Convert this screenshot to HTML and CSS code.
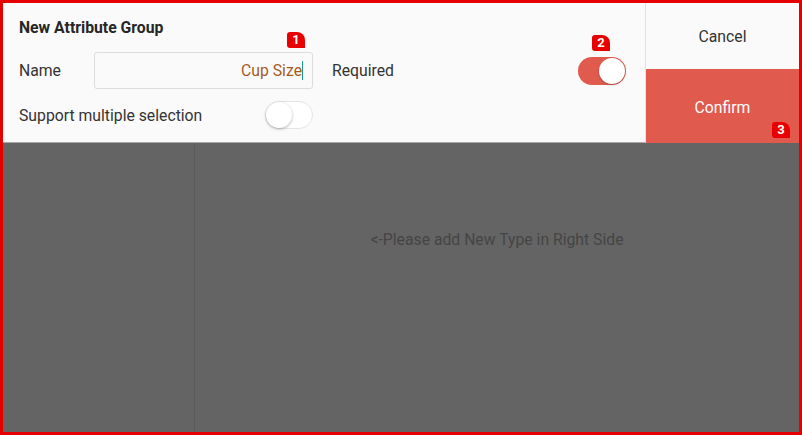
FILE: index.html
```html
<!DOCTYPE html>
<html>
<head>
<meta charset="utf-8">
<link rel="stylesheet" href="styles.css">
</head>
<body>
<div class="frame">
  <div class="top">
    <div class="form">
      <div class="title">New Attribute Group</div>
      <div class="row row-name">
        <span class="label label-name">Name</span>
        <div class="input">
          <span class="value">Cup Size</span><span class="caret"></span>
          <span class="badge badge-1">1</span>
        </div>
        <span class="label label-req">Required</span>
        <div class="switch switch-on">
          <span class="knob"></span>
          <span class="badge badge-2">2</span>
        </div>
      </div>
      <div class="row row-multi">
        <span class="label">Support multiple selection</span>
        <div class="switch switch-off"><span class="knob"></span></div>
      </div>
    </div>
    <div class="actions">
      <div class="btn btn-cancel">Cancel</div>
      <div class="btn btn-confirm">Confirm<span class="badge badge-3">3</span></div>
    </div>
  </div>
  <div class="body">
    <div class="side"></div>
    <div class="main"><span class="hint">&lt;-Please add New Type in Right Side</span></div>
  </div>
</div>
</body>
</html>
```

FILE: styles.css
```css
* { box-sizing: border-box; }
html, body { margin: 0; padding: 0; }
body {
  font-family: Roboto, "Liberation Sans", sans-serif;
  width: 802px;
  height: 435px;
  overflow: hidden;
}
.frame {
  width: 802px;
  height: 435px;
  border: 3px solid #e50000;
  display: flex;
  flex-direction: column;
  background: #646464;
}
.top {
  display: flex;
  height: 140px;
  flex: none;
}
.form {
  width: 643px;
  background: #fafafa;
  border-right: 1px solid #e2e2e2;
  border-bottom: 1px solid #a8a8a8;
  padding: 15px 19px 0 16px;
  display: flex;
  flex-direction: column;
}
.title {
  font-size: 15.75px;
  font-weight: bold;
  color: #262626;
  line-height: 20px;
}
.row {
  display: flex;
  align-items: center;
}
.row-name {
  margin-top: 14px;
  height: 37px;
}
.label {
  font-size: 15.75px;
  color: #333;
}
.label-name { width: 75px; }
.input {
  position: relative;
  width: 219px;
  height: 37px;
  border: 1px solid #dcdcdc;
  border-radius: 3px;
  background: #fafafa;
  display: flex;
  align-items: center;
  justify-content: flex-end;
  padding-right: 9px;
}
.value {
  font-size: 15.75px;
  color: #a65a24;
}
.caret {
  width: 1px;
  height: 19px;
  background: #1a9a8a;
}
.label-req { margin-left: 19px; flex: 1; }
.switch {
  position: relative;
  width: 48px;
  height: 28px;
  border-radius: 14px;
  flex: none;
}
.switch-on {
  background: #e05a4e;
}
.switch-on .knob {
  position: absolute;
  right: 1px;
  top: 1px;
  width: 26px;
  height: 26px;
  border-radius: 50%;
  background: #fff;
  box-shadow: 0 1px 2px rgba(0,0,0,0.25);
}
.switch-off {
  background: #fff;
  border: 1px solid #e4e4e4;
}
.switch-off .knob {
  position: absolute;
  left: 0;
  top: 0;
  width: 26px;
  height: 26px;
  border-radius: 50%;
  background: #fff;
  box-shadow: 0 1px 3px rgba(0,0,0,0.3);
}
.row-multi {
  margin-top: 12px;
  height: 28px;
  width: 294px;
  justify-content: space-between;
}
.actions {
  flex: 1;
  display: flex;
  flex-direction: column;
}
.btn {
  display: flex;
  align-items: center;
  justify-content: center;
  font-size: 15.75px;
}
.btn-cancel {
  height: 66px;
  background: #fafafa;
  color: #333;
}
.btn-confirm {
  position: relative;
  flex: 1;
  background: #e05a4e;
  color: #fff;
  padding-top: 2px;
}
.badge {
  position: absolute;
  width: 18px;
  height: 16px;
  background: #e80000;
  color: #fff;
  font-size: 13px;
  font-weight: bold;
  line-height: 16px;
  text-align: center;
  border-radius: 3px 8px 0 3px;
}
.badge-1 { right: 7px; top: -21px; }
.badge-2 { left: 14px; top: -22px; }
.badge-3 { right: 9px; bottom: 5px; }
.body {
  flex: 1;
  display: flex;
}
.side {
  width: 192px;
  border-right: 1px solid #5c5c5c;
}
.main {
  flex: 1;
  display: flex;
  justify-content: center;
  padding-top: 87px;
}
.hint {
  font-size: 15.75px;
  color: #454545;
  line-height: 20px;
  height: 20px;
}
```
